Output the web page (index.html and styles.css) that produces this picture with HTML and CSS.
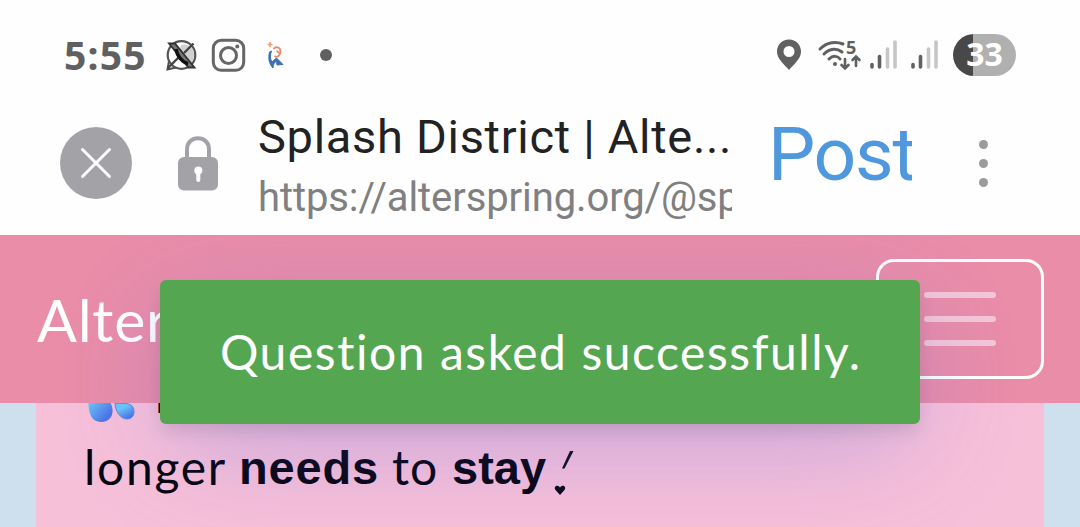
FILE: index.html
```html
<!DOCTYPE html>
<html lang="en">
<head>
    <meta charset="utf-8">
    <title>Splash District | Alterspring</title>
    <link rel="stylesheet" href="styles.css">
</head>
<body>
    <div class="status-bar">
        <span class="clock">5:55</span>
        <svg class="notifications" width="180" height="60" viewBox="0 0 180 60" fill="none">
            <!-- chat -->
            <path d="M19 36L17.500 44.500L26 42.500" fill="#fff" stroke="#4d4d4d" stroke-width="2"/>
            <circle cx="31.500" cy="30" r="13.800" fill="#fff" stroke="#555" stroke-width="2.200"/>
            <path d="M31 20C38 18 44 23 44 30C44 34 42 38 39 40L29 29Z" fill="#d0d0d0"/>
            <path d="M19 18.500H25L44.500 42.500H38.500Z" fill="#777" stroke="#333" stroke-width="1.800"/>
            <path d="M43.500 18.500L34 28M29 32L18 43" stroke="#444" stroke-width="2.400"/>
            <path d="M26 24C27 31 32 37 38 39" stroke="#111" stroke-width="3.500"/>
            <!-- camera -->
            <rect x="63.300" y="15.300" width="30.400" height="30" rx="8" stroke="#666" stroke-width="3"/>
            <circle cx="78.500" cy="30.500" r="8" stroke="#666" stroke-width="3"/>
            <circle cx="87.300" cy="21.500" r="2" fill="#666"/>
            <!-- bird -->
            <path d="M119.500 27C118 33 119 39 123 43C123 39 125 37 126.500 36L127 40L133 39.500L126.500 33L122 37C120 34 120 30 121.500 26Z" fill="#3b70b5" stroke="#3b70b5"/>
            <path d="M123.500 24C126 21 131 22 130.500 27C130 31 127 33 124.500 31M126.500 26L129.500 28" stroke="#e58a65" stroke-width="1.800"/>
            <path d="M120 17V22M117.500 19.500H122.500" stroke="#ed9b79" stroke-width="1.600"/>
            <circle cx="176" cy="30" r="6" fill="#606060"/>
        </svg>
        <svg class="signals" width="170" height="60" viewBox="0 0 170 60" fill="none">
            <path fill-rule="evenodd" d="M14 14.500C7 14.500 2 20 2 26.500C2 34 9 39 14 45C19 39 26 34 26 26.500C26 20 21 14.500 14 14.500ZM14 21A5.500 5.500 0 1 1 14 32A5.500 5.500 0 1 1 14 21Z" fill="#606060"/>
            <g stroke="#606060" stroke-width="3" stroke-linecap="round">
                <path d="M45 24C52 17 61 16 68 19M49 29C55 23 62 23 67 27M54 34C58 30 63 31 65 34"/>
                <path d="M70 34V43M66.500 40L70 43.500L73.500 40M81 41V32M77.500 35L81 31.500L84.500 35" stroke-width="2.600"/>
            </g>
            <circle cx="60" cy="39" r="2" fill="#606060"/>
            <text x="71" y="29" class="wifi-number">5</text>
            <g stroke-width="3.600" stroke-linecap="round">
                <path d="M97 39.500V42M104.500 31.500V42M138 39.500V42M145.500 31.500V42" stroke="#606060"/>
                <path d="M112.500 24V42M120 17V42M153.500 24V42M161 17V42" stroke="#c6c6c6"/>
            </g>
        </svg>
        <span class="battery">33</span>
    </div>

    <div class="browser-bar">
        <svg class="close" width="72" height="72" viewBox="0 0 72 72">
            <circle cx="36" cy="36" r="36" fill="#a3a2a7"/>
            <path d="M22.500 22.500L49.500 49.500M49.500 22.500L22.500 49.500" stroke="#fff" stroke-width="3" stroke-linecap="round"/>
        </svg>
        <svg class="lock" width="40" height="56" viewBox="0 0 40 56">
            <path d="M9 25V13.500C9 -1.500 31 -1.500 31 13.500V25" fill="none" stroke="#a3a2a7" stroke-width="4"/>
            <rect y="21" width="40" height="33.500" rx="6" fill="#a3a2a7"/>
            <circle cx="20.300" cy="34.500" r="4" fill="#fff"/>
            <path d="M20.300 36V44" stroke="#fff" stroke-width="4" stroke-linecap="round"/>
        </svg>
        <div class="page-info">
            <div class="page-title">Splash District | Alte...</div>
            <div class="page-url">https://alterspring.org/@sp</div>
        </div>
        <div class="post">Post</div>
        <div class="menu-dots"><i></i><i></i><i></i></div>
    </div>

    <div class="site">
        <nav class="navbar">
            <span class="brand">Alter</span>
            <div class="toggler"><i></i><i></i><i></i></div>
        </nav>
        <div class="card">
            <div class="line line-first">
                <svg width="50" height="48" viewBox="0 0 50 48">
                    <defs>
                        <linearGradient id="drop" x1="0" y1="0" x2="0.600" y2="1">
                            <stop offset="0.400" stop-color="#6cc6f8"/>
                            <stop offset="1" stop-color="#4b74e4"/>
                        </linearGradient>
                    </defs>
                    <path d="M5 5C5 20 0 47 17 47C29 47 31 35 26 27C21 18 11 15 5 5Z" fill="url(#drop)"/>
                    <path d="M31 28C31 35 36 44 43 44C50 44 52 36 48 31C44 27 37 29 31 28Z" fill="url(#drop)" stroke="#4c8ce3"/>
                </svg>
                <span class="first-letter">N</span>
            </div>
            <div class="line">
                <span class="longer">longer</span>
                <b class="needs">needs</b>
                <span class="to">to</span>
                <b class="stay">stay</b>
                <svg class="mark" width="22" height="48" viewBox="0 0 22 48">
                    <path d="M8 19.500L16 2H19.500L10.500 19.500Z" fill="#0b0818"/>
                    <path d="M6 46L1.500 41C-1 37 4 35 6 38.500C8 35 13 37 10.500 41Z" fill="#0b0818"/>
                </svg>
            </div>
        </div>
        <div class="toast"><span>Question asked successfully.</span></div>
    </div>
</body>
</html>
```
FILE: styles.css
```css
* {
    box-sizing: border-box;
}

body {
    margin: 0;
    height: 527px;
    overflow: hidden;
    background: #fefefe;
    font-family: Lato, sans-serif;
}

svg {
    display: block;
    flex-shrink: 0;
    overflow: visible;
}

.status-bar {
    display: flex;
    align-items: center;
    height: 110px;
    padding: 0 64px;
}

.clock {
    width: 86px;
    font: 700 39px/60px "Noto Sans", sans-serif;
    letter-spacing: 1.2px;
    color: #606060;
    white-space: nowrap;
}

.signals {
    margin-left: auto;
}

.wifi-number {
    font: 700 18px "Noto Sans", sans-serif;
    fill: #606060;
}

.battery {
    width: 63px;
    height: 42px;
    margin-left: 8px;
    border-radius: 21px;
    background: linear-gradient(90deg, #484848 20px, #b0b0b0 20px);
    color: #fff;
    font: 700 32px/39px "Open Sans", sans-serif;
    text-align: center;
}

.browser-bar {
    display: flex;
    align-items: flex-start;
    height: 125px;
    padding: 0 60px;
}

.close {
    margin-top: 17px;
}

.lock {
    margin: 26px 40px 0 46px;
}

.page-info {
    width: 474px;
    overflow: hidden;
    white-space: nowrap;
}

.page-title {
    font: 400 47px/54px Roboto, sans-serif;
    letter-spacing: 0.7px;
    color: #222;
}

.page-url {
    font: 400 40px/68px Roboto, sans-serif;
    letter-spacing: -0.1px;
    color: #808080;
}

.post {
    width: 144px;
    margin-left: 36px;
    overflow: hidden;
    font: 400 75px/88px Roboto, sans-serif;
    letter-spacing: -1.3px;
    color: #4f98dd;
}

.menu-dots {
    display: flex;
    flex-direction: column;
    gap: 10px;
    margin: 30px 0 0 67px;
}

.menu-dots i {
    width: 9px;
    height: 9px;
    border-radius: 50%;
    background: #9b9b9b;
}

.site {
    position: relative;
    height: 292px;
    overflow: hidden;
    background: #cedfed;
}

.navbar {
    display: flex;
    align-items: center;
    justify-content: space-between;
    height: 168px;
    padding: 0 36px;
    background: #e98da9;
}

.brand {
    padding-left: 1px;
    font-size: 59px;
    letter-spacing: 0.8px;
    color: #fff;
}

.toggler {
    display: flex;
    flex-direction: column;
    justify-content: center;
    align-items: center;
    gap: 18px;
    width: 168px;
    height: 120px;
    border: 3px solid #fff;
    border-radius: 18px;
}

.toggler i {
    width: 72px;
    height: 6px;
    border-radius: 3px;
    background: #f4c6d7;
}

.card {
    height: 124px;
    margin: 0 36px;
    padding-left: 48px;
    overflow: hidden;
    background: #f7c0d9;
}

.line {
    display: flex;
    height: 72px;
    font: 400 48px/68px Lato, sans-serif;
    color: #08040f;
    white-space: nowrap;
}

.line-first {
    height: 30px;
    align-items: flex-end;
    padding-bottom: 10px;
}

.line b {
    font: 700 47px/70px "Liberation Sans", sans-serif;
}

.first-letter {
    margin-left: 20px;
    line-height: 60px;
    margin-bottom: -2px;
}

.longer {
    width: 155px;
    letter-spacing: 1.7px;
}

.line .needs {
    width: 153px;
    letter-spacing: 0.8px;
}

.to {
    width: 60px;
    letter-spacing: 1px;
}

.stay {
    width: 102px;
}

.mark {
    margin-top: 16px;
}

.toast {
    position: absolute;
    top: 45px;
    left: 160px;
    width: 760px;
    height: 144px;
    padding-left: 60px;
    border-radius: 6px;
    background: #55a651;
    box-shadow: 0 9px 18px -3px rgba(0, 0, 0, 0.12), 0 30px 108px -12px rgba(77, 96, 232, 0.3);
    color: #fff;
    font: 400 48px/144px Lato, sans-serif;
    font-variant-ligatures: none;
    letter-spacing: 1.55px;
    white-space: nowrap;
}
```
